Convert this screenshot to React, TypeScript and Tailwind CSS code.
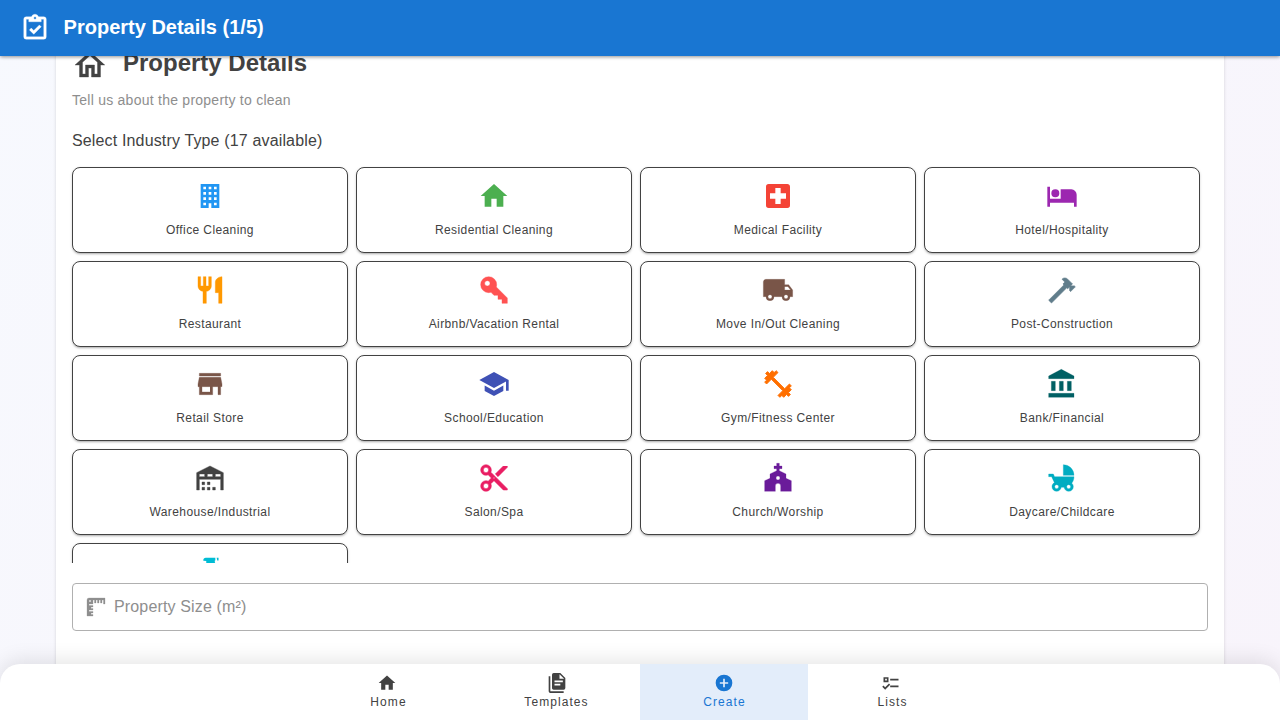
type IconProps = { d: string; className: string; weight?: number };

function Icon({ d, className, weight = 0 }: IconProps) {
  return (
    <svg
      viewBox="0 0 24 24"
      fill="currentColor"
      fillRule="evenodd"
      stroke={weight ? "currentColor" : "none"}
      strokeWidth={weight}
      className={className}
      aria-hidden="true"
    >
      <path d={d} />
    </svg>
  );
}

const HOME = "M10,20V14H14V20H19V12H22L12,3L2,12H5V20H10Z";
const HOME_OUTLINE = "M12 5.69L17 10.19V18H15V12H9V18H7V10.19L12 5.69M12 3L2 12H5V20H11V14H13V20H19V12H22";
const CLIPBOARD =
  "M19,3H14.82C14.4,1.84 13.3,1 12,1C10.7,1 9.6,1.84 9.18,3H5A2,2 0 0,0 3,5V19A2,2 0 0,0 5,21H19A2,2 0 0,0 21,19V5A2,2 0 0,0 19,3M12,3A1,1 0 0,1 13,4A1,1 0 0,1 12,5A1,1 0 0,1 11,4A1,1 0 0,1 12,3M7,7H17V5H19V19H5V5H7V7M7.5,13.5L9,12L11,14L15.5,9.5L17,11L11,17L7.5,13.5Z";
const RULER =
  "M3,5V21H9V19.5H7V18H9V16.5H5V15H9V13.5H7V12H9V10.5H5V9H9V5H10.5V8H12V5H13.5V8H15V5H16.5V8H18V5H19.5V9H21V3H5A2,2 0 0,0 3,5M6,7A1,1 0 0,1 5,6A1,1 0 0,1 6,5A1,1 0 0,1 7,6A1,1 0 0,1 6,7Z";

type Industry = { label: string; color: string; d: string; weight?: number };

const industries: Industry[] = [
  { label: "Office Cleaning", color: "text-[#2196f3]", d: "M5,3V21H11V17.5H13V21H19V3H5M7,5H9V7H7V5M11,5H13V7H11V5M15,5H17V7H15V5M7,9H9V11H7V9M11,9H13V11H11V9M15,9H17V11H15V9M7,13H9V15H7V13M11,13H13V15H11V13M15,13H17V15H15V13M7,17H9V19H7V17M15,17H17V19H15V17Z" },
  { label: "Residential Cleaning", color: "text-[#4caf50]", d: HOME },
  { label: "Medical Facility", color: "text-[#f44336]", d: "M18,14H14V18H10V14H6V10H10V6H14V10H18M19,3H5A2,2 0 0,0 3,5V19A2,2 0 0,0 5,21H19A2,2 0 0,0 21,19V5C21,3.89 20.1,3 19,3Z" },
  { label: "Hotel/Hospitality", color: "text-[#9c27b0]", d: "M19,7H11V14H3V5H1V20H3V17H21V20H23V11A4,4 0 0,0 19,7M7,13A3,3 0 0,0 10,10A3,3 0 0,0 7,7A3,3 0 0,0 4,10A3,3 0 0,0 7,13Z" },
  { label: "Restaurant", color: "text-[#ff9800]", weight: 0.3, d: "M11,9H9V2H7V9H5V2H3V9C3,11.12 4.66,12.84 6.75,12.97V22H9.25V12.97C11.34,12.84 13,11.12 13,9V2H11V9M16,6V14H18.5V22H21V2C18.24,2 16,4.24 16,6Z" },
  { label: "Airbnb/Vacation Rental", color: "text-[#ff5252]", weight: 0.3, d: "M22,18V22H18V19H15V16H12L9.74,13.74C9.19,13.91 8.61,14 8,14A6,6 0 0,1 2,8A6,6 0 0,1 8,2A6,6 0 0,1 14,8C14,8.61 13.91,9.19 13.74,9.74L22,18M7,5A2,2 0 0,0 5,7A2,2 0 0,0 7,9A2,2 0 0,0 9,7A2,2 0 0,0 7,5Z" },
  { label: "Move In/Out Cleaning", color: "text-[#795548]", weight: 0.2, d: "M18,18.5A1.5,1.5 0 0,1 16.5,17A1.5,1.5 0 0,1 18,15.5A1.5,1.5 0 0,1 19.5,17A1.5,1.5 0 0,1 18,18.5M19.5,9.5L21.46,12H17V9.5M6,18.5A1.5,1.5 0 0,1 4.5,17A1.5,1.5 0 0,1 6,15.5A1.5,1.5 0 0,1 7.5,17A1.5,1.5 0 0,1 6,18.5M20,8H17V4H3C1.89,4 1,4.89 1,6V17H3A3,3 0 0,0 6,20A3,3 0 0,0 9,17H15A3,3 0 0,0 18,20A3,3 0 0,0 21,17H23V12L20,8Z" },
  { label: "Post-Construction", color: "text-[#607d8b]", weight: 0.5, d: "M2,19.63L13.43,8.2L12.72,7.5L14.14,6.07L12,3.89C13.2,2.7 15.09,2.7 16.27,3.89L19.87,7.5L18.45,8.91H21.29L22,9.62L18.45,13.21L17.74,12.5V9.62L16.27,11.04L15.56,10.33L4.13,21.76L2,19.63Z" },
  { label: "Retail Store", color: "text-[#795548]", weight: 0.25, d: "M12 18H6V14H12M21 14V12L20 7H4L3 12V14H4V20H14V14H18V20H20V14M20 4H4V6H20Z" },
  { label: "School/Education", color: "text-[#3f51b5]", d: "M12,3L1,9L12,15L21,10.09V17H23V9M5,13.18V17.18L12,21L19,17.18V13.18L12,17L5,13.18Z" },
  { label: "Gym/Fitness Center", color: "text-[#ff6f00]", weight: 0.7, d: "M20.57,14.86L22,13.43L20.57,12L17,15.57L8.43,7L12,3.43L10.57,2L9.14,3.43L7.71,2L5.57,4.14L4.14,2.71L2.71,4.14L4.14,5.57L2,7.71L3.43,9.14L2,10.57L3.43,12L7,8.43L15.57,17L12,20.57L13.43,22L14.86,20.57L16.29,22L18.43,19.86L19.86,21.29L21.29,19.86L19.86,18.43L22,16.29L20.57,14.86Z" },
  { label: "Bank/Financial", color: "text-[#006064]", weight: 0.2, d: "M11.5,1L2,6V8H21V6L11.5,1M16,10V17H19V10H16M2,22H21V19H2V22M10,10V17H13V10H10M4,10V17H7V10H4Z" },
  { label: "Warehouse/Industrial", color: "text-[#424242]", weight: 0.3, d: "M6 19H8V21H6V19M12 3L2 8V21H4V13H20V21H22V8L12 3M8 11H4V9H8V11M14 11H10V9H14V11M20 11H16V9H20V11M6 15H8V17H6V15M10 15H12V17H10V15M10 19H12V21H10V19M14 19H16V21H14V19Z" },
  { label: "Salon/Spa", color: "text-[#e91e63]", weight: 0.4, d: "M19,3L13,9L15,11L22,4V3M12,12.5A0.5,0.5 0 0,1 11.5,12A0.5,0.5 0 0,1 12,11.5A0.5,0.5 0 0,1 12.5,12A0.5,0.5 0 0,1 12,12.5M6,20A2,2 0 0,1 4,18C4,16.89 4.9,16 6,16A2,2 0 0,1 8,18C8,19.11 7.1,20 6,20M6,8A2,2 0 0,1 4,6C4,4.89 4.9,4 6,4A2,2 0 0,1 8,6C8,7.11 7.1,8 6,8M9.64,7.64C9.87,7.14 10,6.59 10,6A4,4 0 0,0 6,2A4,4 0 0,0 2,6A4,4 0 0,0 6,10C6.59,10 7.14,9.87 7.64,9.64L10,12L7.64,14.36C7.14,14.13 6.59,14 6,14A4,4 0 0,0 2,18A4,4 0 0,0 6,22A4,4 0 0,0 10,18C10,17.41 9.87,16.86 9.64,16.36L12,14L19,21H22V20L9.64,7.64Z" },
  { label: "Church/Worship", color: "text-[#6a1b9a]", weight: 0.2, d: "M18 12.22V9L13 6.5V5H15V3H13V1H11V3H9V5H11V6.5L6 9V12.22L2 14V22H10V18A2 2 0 0 1 14 18V22H22V14L18 12.22M12 13.5A1.5 1.5 0 0 1 12 10.5A1.5 1.5 0 0 1 12 13.5Z" },
  { label: "Daycare/Childcare", color: "text-[#00acc1]", weight: 0.25, d: "M13,2V10H21A8,8 0 0,0 13,2M19.32,15.89C20.37,14.54 21,12.84 21,11H6.44L5.49,9H2V11H4.22C4.22,11 6.11,15.07 6.34,15.42C5.24,16 4.5,17.17 4.5,18.5A3.5,3.5 0 0,0 8,22C9.76,22 11.22,20.7 11.46,19H13.54C13.78,20.7 15.24,22 17,22A3.5,3.5 0 0,0 20.5,18.5C20.5,17.46 20.04,16.53 19.32,15.89M8,20A1.5,1.5 0 0,1 6.5,18.5A1.5,1.5 0 0,1 8,17A1.5,1.5 0 0,1 9.5,18.5A1.5,1.5 0 0,1 8,20M17,20A1.5,1.5 0 0,1 15.5,18.5A1.5,1.5 0 0,1 17,17A1.5,1.5 0 0,1 18.5,18.5A1.5,1.5 0 0,1 17,20Z" },
  { label: "Other", color: "text-[#00bcd4]", d: "M8.8 1.4H16V3.4H15.6V4.6L16.4 6V8C18 9 19 11 19 13V22H7V13C7 11 8 9 10.8 8V5.2H9.2V3.8L7 3.6C6.8 2.6 7.6 1.4 8.8 1.4M17 1.4H18.4V3.4H17.4Z" },
];

const tabs = [
  { label: "Home", active: false, shift: "-ml-[2px]", d: HOME },
  { label: "Templates", active: false, shift: "ml-px", d: "M16,15H9V13H16V15M19,11H9V9H19V11M15,7H20.5L15,1.5V7M8,0H16L22,6V18A2,2 0 0,1 20,20H8C6.89,20 6,19.1 6,18V2A2,2 0 0,1 8,0M4,4V22H20V24H4A2,2 0 0,1 2,22V4H4Z" },
  { label: "Create", active: true, shift: "-ml-px", d: "M17,13H13V17H11V13H7V11H11V7H13V11H17M12,2A10,10 0 0,0 2,12A10,10 0 0,0 12,22A10,10 0 0,0 22,12A10,10 0 0,0 12,2Z" },
  { label: "Lists", active: false, shift: "-ml-[2px]", d: "M3,5H9V11H3V5M5,7V9H7V7H5M11,7H21V9H11V7M11,15H21V17H11V15M5,20L1.5,16.5L2.91,15.09L5,17.17L9.59,12.59L11,14L5,20Z" },
];

export default function App() {
  return (
    <div className="flex h-screen flex-col overflow-hidden bg-linear-135 from-[#f7f9fe] to-[#f8f4fb] font-['Liberation_Sans',Arial,sans-serif] text-[#424242]">
      <header className="relative z-10 flex h-14 shrink-0 items-center gap-[13.6px] bg-[#1976d2] pb-px pl-5 text-white shadow-[0_2px_4px_-1px_rgba(0,0,0,0.2),0_1px_3px_rgba(0,0,0,0.25)]">
        <Icon d={CLIPBOARD} weight={0.25} className="size-[30px]" />
        <h1 className="-mt-px text-xl leading-6 font-bold">Property Details (1/5)</h1>
      </header>

      <main className="min-h-0 flex-1 overflow-hidden px-14">
        <section className="-mt-6 h-[700px] bg-white px-4 pt-3 shadow-[0_1px_3px_rgba(0,0,0,0.15)]">
          <div className="flex h-[44px] items-center gap-[15px]">
            <Icon d={HOME_OUTLINE} weight={0.25} className="mt-[-2px] size-9" />
            <h2 className="mt-[-6px] text-2xl leading-8 font-bold">Property Details</h2>
          </div>
          <p className="mt-[2px] text-sm leading-5 tracking-[0.25px] text-[#8e8e8e]">Tell us about the property to clean</p>
          <h3 className="mt-[17px] text-base leading-7 tracking-[0.15px]">Select Industry Type (17 available)</h3>

          <div className="-mx-1 mt-2 h-[400px] overflow-hidden px-1 pt-1">
            <div className="grid w-[1128px] grid-cols-4 gap-2">
              {industries.map((item) => (
                <button
                  key={item.label}
                  className="flex h-[86px] flex-col items-center rounded-lg border border-[#424242] bg-white pt-3 shadow-[0_2px_2px_-1px_rgba(0,0,0,0.2),0_1px_3px_rgba(0,0,0,0.16)]"
                >
                  <Icon d={item.d} weight={item.weight} className={`size-8 ${item.color}`} />
                  <span className="mt-2 text-xs leading-5 tracking-[0.4px]">{item.label}</span>
                </button>
              ))}
            </div>
          </div>

          <label className="mt-5 flex h-12 items-center gap-1.5 rounded border border-[#b0b0b0] pl-[11px] text-[#8e8e8e]">
            <Icon d={RULER} weight={0.3} className="size-6" />
            <input
              placeholder="Property Size (m²)"
              className="h-full flex-1 bg-transparent text-base tracking-[0.15px] outline-none placeholder:text-[#8e8e8e]"
            />
          </label>
        </section>
      </main>

      <nav className="relative z-10 -mt-14 flex h-14 shrink-0 justify-center rounded-t-[20px] bg-white shadow-[0_-4px_20px_rgba(0,0,0,0.1)]">
        {tabs.map((tab) => (
          <button
            key={tab.label}
            className={`flex w-[168px] flex-col items-center pt-[9px] ${tab.active ? "bg-[#e3edfa] text-[#1976d2]" : "text-[#424242]"}`}
          >
            <Icon d={tab.d} className={`size-5 ${tab.shift}`} />
            <span className="pl-px text-xs leading-[18px] tracking-[1.07px]">{tab.label}</span>
          </button>
        ))}
      </nav>
    </div>
  );
}
